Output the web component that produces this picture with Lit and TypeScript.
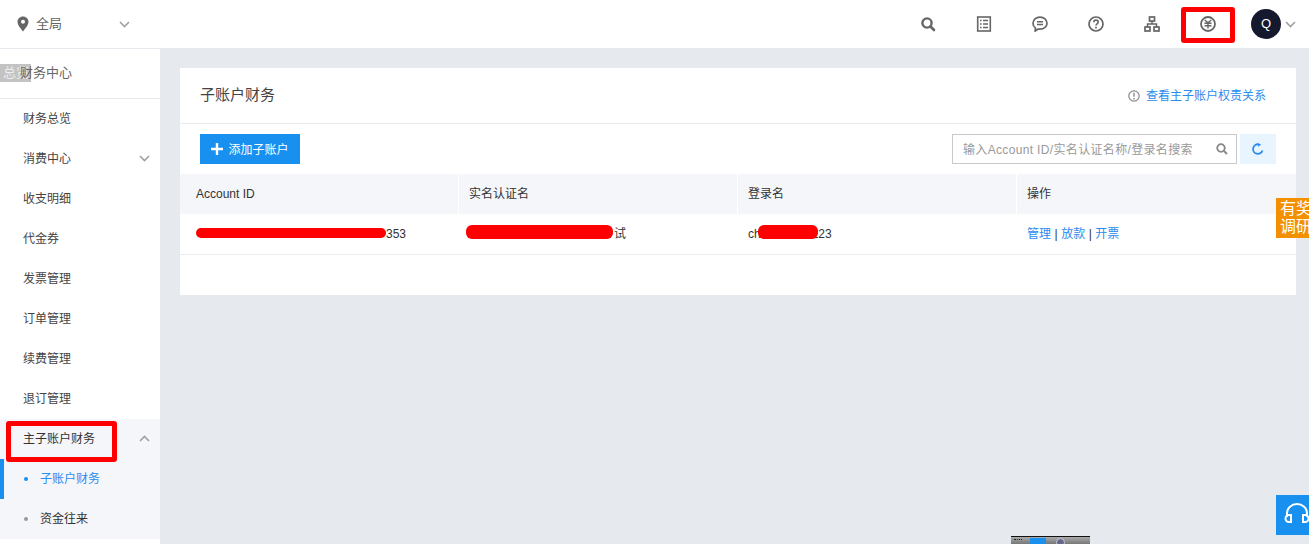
import { LitElement, html, css, svg } from "lit";
import { customElement } from "lit/decorators.js";

const chevron = (up = false) => html`<svg class="chev" width="11" height="7" viewBox="0 0 11 7"><path d="${up ? "M1 6 L5.500 1.500 L10 6" : "M1 1 L5.500 5.500 L10 1"}" fill="none" stroke="#a0a0a0" stroke-width="1.600"/></svg>`;

const topIcons = [
  svg`<circle cx="7" cy="7" r="4.600" fill="none" stroke="#666" stroke-width="2.400"/><path d="M10.500 10.500 L14 14" stroke="#666" stroke-width="2.600" stroke-linecap="round"/>`,
  svg`<rect x="1.700" y="1" width="12.600" height="14" fill="none" stroke="#666" stroke-width="1.600"/><path d="M4 4.500h1.600M7 4.500h5M4 8h1.600M7 8h5M4 11.500h1.600M7 11.500h5" stroke="#666" stroke-width="1.500"/>`,
  svg`<path d="M8 1.200c4 0 7 2.600 7 6s-3 6-7 6c-.6 0-1.200 0-1.700-.2L3.200 15l.2-3.100C1.900 10.800 1 9.100 1 7.200c0-3.400 3-6 7-6z" fill="none" stroke="#666" stroke-width="1.700"/><path d="M5 5.800h6M5 8.500h6" stroke="#666" stroke-width="1.500"/>`,
  svg`<circle cx="8" cy="8" r="7" fill="none" stroke="#666" stroke-width="1.700"/><path d="M5.800 6.200c0-1.300 1-2.100 2.200-2.100s2.200.8 2.200 2c0 1.800-2.200 1.800-2.200 3.500" fill="none" stroke="#666" stroke-width="1.600"/><path d="M8 10.800v1.700" stroke="#666" stroke-width="1.700"/>`,
  svg`<rect x="5.500" y="1" width="5" height="4" fill="none" stroke="#666" stroke-width="1.700"/><rect x="1" y="11" width="5" height="4" fill="none" stroke="#666" stroke-width="1.700"/><rect x="10" y="11" width="5" height="4" fill="none" stroke="#666" stroke-width="1.700"/><path d="M8 5v3M3.500 11V8h9v3" fill="none" stroke="#666" stroke-width="1.500"/>`,
  svg`<circle cx="8" cy="8" r="7" fill="none" stroke="#666" stroke-width="1.800"/><path d="M4.800 4l3.200 2.800L11.200 4M4.500 7.300h7M4.500 9.800h7M8 6.800v5.700" fill="none" stroke="#666" stroke-width="1.400"/>`,
];

const menu = ["财务总览", "消费中心", "收支明细", "代金券", "发票管理", "订单管理", "续费管理", "退订管理"];

@customElement("app-root")
export class AppRoot extends LitElement {
  static styles = css`
    :host {
      display: block;
      position: relative;
      width: 100%;
      height: 100vh;
      overflow: hidden;
      background: #e6e9ee;
      font-family: "Liberation Sans", "Noto Sans CJK SC", sans-serif;
      font-size: 12px;
      line-height: 16px;
      color: #333;
    }
    svg { display: block; }
    .topbar {
      height: 48px;
      background: #fff;
      display: flex;
      align-items: center;
      padding: 0 13px 0 17px;
      box-sizing: border-box;
    }
    .region { display: flex; align-items: center; color: #666; font-size: 13px; }
    .region span { margin-left: 7px; width: 83px; }
    .icons { margin-left: auto; display: flex; align-items: center; }
    .icons svg.ti { margin-right: 40px; }
    .avatar {
      width: 30px; height: 30px; border-radius: 50%;
      background: #14192e; color: #fff;
      display: flex; align-items: center; justify-content: center;
      font-size: 13px;
      margin-left: -5px; margin-right: 4px;
    }
    .body { display: flex; height: calc(100% - 48px); margin-top: 1px; }
    .side { width: 160px; flex: none; background: #fff; }
    .side-head {
      height: 50px; padding: 16px 0 0 20px;
      font-size: 13px; color: #666;
      border-bottom: 1px solid #e6e9ee;
      box-sizing: border-box;
    }
    .item {
      height: 40px; display: flex; align-items: center; justify-content: space-between;
      padding: 0 10px 1px 23px; box-sizing: border-box; color: #444; position: relative;
    }
    .active-group { background: #f4f6fa; }
    .active-group .item { color: #333; }
    .sub { padding-left: 40px; justify-content: flex-start; }
    .sub::before {
      content: ""; position: absolute; left: 24px; top: 18px;
      width: 4px; height: 4px; border-radius: 50%; background: #999;
    }
    .sub.on { color: #2a8cee; }
    .sub.on::before { background: #1890f0; }
    .sub.on::after {
      content: ""; position: absolute; left: 0; top: 0; bottom: 0; width: 4px; background: #1890f0;
    }
    .main { flex: 1; padding: 19px 13px 0 20px; min-width: 0; }
    .card { background: #fff; height: 227px; }
    .card-head {
      height: 56px; display: flex; align-items: center; justify-content: space-between;
      padding: 0 30px 2px 20px; border-bottom: 1px solid #e8eaef; box-sizing: border-box;
    }
    .title { font-size: 15px; color: #444; }
    .rel { display: flex; align-items: center; gap: 6px; color: #2a8cee; padding-top: 3px; }
    .toolbar {
      height: 50px; display: flex; align-items: center; justify-content: space-between;
      padding: 0 20px;
    }
    .btn {
      width: 100px; height: 30px; background: #1890f0; color: #fff;
      display: flex; align-items: center; justify-content: center; gap: 5px;
    }
    .btn span { padding-top: 1px; }
    .tools { display: flex; align-items: center; gap: 3px; }
    .search {
      width: 285px; height: 30px; border: 1px solid #c9c9c9; box-sizing: border-box;
      display: flex; align-items: center; justify-content: space-between;
      padding: 0 8px 0 10px; color: #999; letter-spacing: 0.34px;
    }
    .search span { white-space: nowrap; padding-top: 1px; }
    .refresh {
      width: 36px; height: 30px; background: #e8f4fe;
      display: flex; align-items: center; justify-content: center;
    }
    .row { display: grid; grid-template-columns: 279px 279px 279px 1fr; height: 40px; align-items: center; }
    .row > div { height: 100%; display: flex; align-items: center; padding-left: 10px; padding-bottom: 1px; box-sizing: border-box; }
    .row > div:first-child { padding-left: 16px; }
    .thead { background: #f4f6fa; }
    .thead > div:not(:last-child) { border-right: 1px solid #fff; }
    .tbody { border-bottom: 1px solid #ececf2; box-sizing: border-box; height: 41px; }
    .tag-353 { margin-left: 190px; }
    .tag-shi { margin-left: 145px; }
    .tag-223 { margin-left: 51px; }
    .link { color: #2a8cee; }
    .sep { color: #333; margin: 0 3.500px; }
    .mark { position: absolute; background: #f00; border-radius: 6px; }
    .m1 { left: 196px; top: 228px; width: 190px; height: 10px; }
    .m2 { left: 466px; top: 225px; width: 147px; height: 14px; }
    .m3 { left: 758px; top: 225px; width: 60px; height: 14px; }
    .anno { position: absolute; border: 5px solid #f00; border-radius: 3px; box-sizing: border-box; }
    .a1 { left: 1181px; top: 7px; width: 54px; height: 36px; }
    .a2 { left: 6px; top: 421px; width: 111px; height: 41px; }
    .side-head span { position: relative; z-index: 2; }
    .badge {
      position: absolute; left: 0; top: 64px; width: 31px; height: 18px; line-height: 17px;
      padding-left: 3px; box-sizing: border-box; z-index: 1;
      background: rgba(170,170,170,0.7); color: #eee; font-size: 13px; white-space: nowrap; overflow: hidden;
    }
    .survey {
      position: absolute; left: 1276px; top: 198px; width: 40px; height: 40px;
      background: #f39000; color: #fff; font-size: 16px; line-height: 18px;
      padding: 2px 0 0 4px; box-sizing: border-box;
    }
    .help {
      position: absolute; left: 1276px; top: 495px; width: 40px; height: 40px;
      background: #1890f0; display: flex; align-items: center; padding-left: 8px; box-sizing: border-box;
    }
    .thumb {
      position: absolute; left: 1011px; top: 536px; width: 79px; height: 8px;
      border-top: 1px solid #111; box-sizing: border-box;
      background: linear-gradient(#aaa, #777);
    }
    .thumb i { position: absolute; left: 19px; top: 1px; width: 16px; height: 7px; background: #1890f0; }
    .thumb b { position: absolute; left: 45px; top: 1px; width: 9px; height: 9px; border-radius: 50%; border: 1px solid #ccd; background: #668; box-sizing: border-box; }
    .thumb u { position: absolute; left: 3px; top: 2px; width: 8px; height: 1px; border-top: 1px dotted #222; }
  `;

  render() {
    return html`
      <div class="topbar">
        <div class="region">
          <svg width="12" height="16" viewBox="0 0 12 16"><path fill-rule="evenodd" d="M6 .5c3 0 5.500 2.300 5.500 5.300 0 3.500-3.500 7-5.500 9.700C4 12.800.5 9.300.5 5.800.5 2.800 3 .5 6 .5zM6 3.800a2 2 0 1 0 0 4 2 2 0 0 0 0-4z" fill="#666"/></svg>
          <span>全局</span>
          ${chevron()}
        </div>
        <div class="icons">
          ${topIcons.map((p) => html`<svg class="ti" width="16" height="16" viewBox="0 0 16 16">${p}</svg>`)}
          <div class="avatar">Q</div>
          ${chevron()}
        </div>
      </div>
      <div class="body">
        <aside class="side">
          <div class="side-head"><span>财务中心</span></div>
          ${menu.map((m) => html`<div class="item"><span>${m}</span>${m === "消费中心" ? chevron() : ""}</div>`)}
          <div class="active-group">
            <div class="item"><span>主子账户财务</span>${chevron(true)}</div>
            <div class="item sub on">子账户财务</div>
            <div class="item sub">资金往来</div>
          </div>
        </aside>
        <main class="main">
          <section class="card">
            <div class="card-head">
              <div class="title">子账户财务</div>
              <div class="rel">
                <svg width="12" height="12" viewBox="0 0 12 12"><circle cx="6" cy="6" r="5.200" fill="none" stroke="#888" stroke-width="1.200"/><path d="M6 2.800v4M6 8v1.400" stroke="#888" stroke-width="1.400"/></svg>
                <span>查看主子账户权责关系</span>
              </div>
            </div>
            <div class="toolbar">
              <div class="btn">
                <svg width="12" height="12" viewBox="0 0 12 12"><path d="M6 0v12M0 6h12" stroke="#fff" stroke-width="2.400"/></svg>
                <span>添加子账户</span>
              </div>
              <div class="tools">
                <div class="search">
                  <span>输入Account ID/实名认证名称/登录名搜索</span>
                  <svg width="12" height="12" viewBox="0 0 12 12"><circle cx="5" cy="5" r="3.800" fill="none" stroke="#888" stroke-width="1.800"/><path d="M8 8l3 3" stroke="#888" stroke-width="2"/></svg>
                </div>
                <div class="refresh">
                  <svg width="12" height="12" viewBox="0 0 12 12"><path d="M10.500 7.500A4.800 4.800 0 1 1 6.500 1.300" fill="none" stroke="#2a8cee" stroke-width="1.800"/><path d="M6 0l3.200 1.800L6 3.800z" fill="#2a8cee"/></svg>
                </div>
              </div>
            </div>
            <div class="row thead">
              <div>Account ID</div><div>实名认证名</div><div>登录名</div><div>操作</div>
            </div>
            <div class="row tbody">
              <div><span class="tag-353">353</span></div>
              <div><span class="tag-shi">试</span></div>
              <div>ch<span class="tag-223">223</span></div>
              <div><span class="link">管理</span><span class="sep">|</span><span class="link">放款</span><span class="sep">|</span><span class="link">开票</span></div>
            </div>
          </section>
        </main>
      </div>
      <div class="mark m1"></div>
      <div class="mark m2"></div>
      <div class="mark m3"></div>
      <div class="anno a1"></div>
      <div class="anno a2"></div>
      <div class="badge">总览</div>
      <div class="survey">有奖<br />调研</div>
      <div class="help">
        <svg width="26" height="24" viewBox="0 0 26 24"><path d="M3 14V10a10 9 0 0 1 20 0v4" fill="none" stroke="#fff" stroke-width="2"/><path d="M5 12h2v7H5a3.500 3.500 0 0 1 0-7zM21 12h-2v7h2a3.500 3.500 0 0 0 0-7z" fill="none" stroke="#fff" stroke-width="2"/></svg>
      </div>
      <div class="thumb"><u></u><i></i><b></b></div>
    `;
  }
}
